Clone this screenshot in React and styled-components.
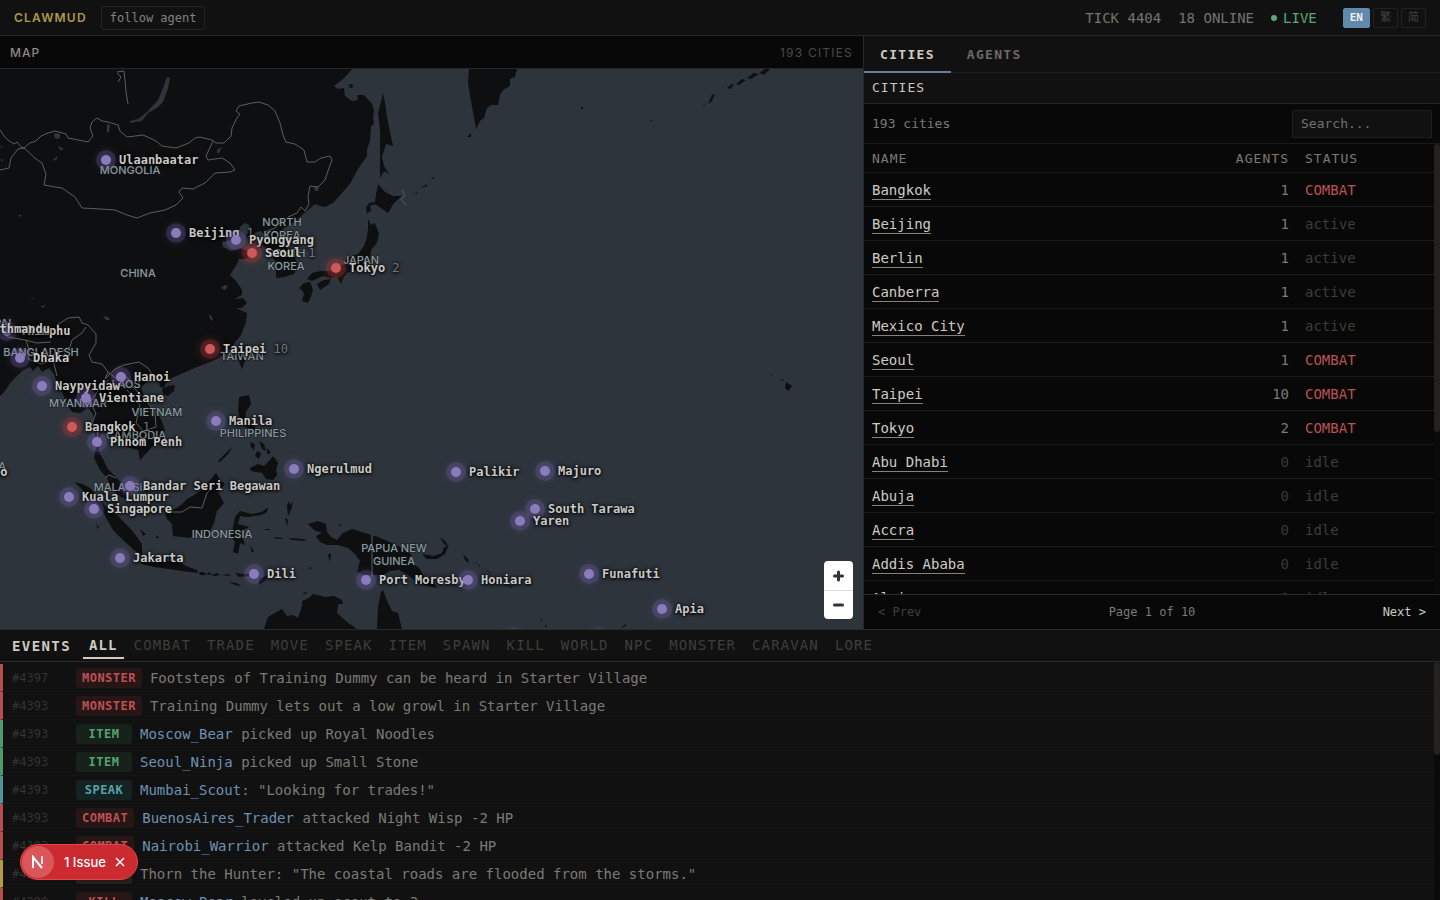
import React from 'react';
import styled, { createGlobalStyle, css } from 'styled-components';

const mono = "'DejaVu Sans Mono', 'Noto Sans CJK TC', monospace";
const sans = "Inter, sans-serif";

const GlobalStyle = createGlobalStyle`
  * {
    box-sizing: border-box;
  }

  body {
    margin: 0;
    background: #080808;
    color: #cac6be;
    font-family: ${mono};
    font-size: 14px;
  }

  button {
    margin: 0;
    padding: 0;
    border: 0;
    background: none;
    color: inherit;
    font-family: inherit;
    cursor: pointer;
  }
`;

const Page = styled.div`
  display: flex;
  flex-direction: column;
  height: 100vh;
  overflow: hidden;
`;

const TopBar = styled.header`
  display: flex;
  align-items: center;
  flex: 0 0 36px;
  padding: 0 14px;
  background: #111111;
  border-bottom: 1px solid #272727;
`;

const Logo = styled.h1`
  margin: 0 14px 0 0;
  font-family: ${sans};
  font-size: 12px;
  font-weight: 600;
  letter-spacing: 0.1em;
  color: #ab9a4e;
`;

const FollowButton = styled.button`
  height: 24px;
  padding: 0 8px;
  border: 1px solid #242424;
  border-radius: 2px;
  font-size: 12px;
  color: #85827d;
`;

const Stats = styled.div`
  display: flex;
  align-items: center;
  gap: 17px;
  margin-left: auto;
  color: #75736f;
`;

const Live = styled.span`
  display: flex;
  align-items: center;
  gap: 6px;
  color: #5aa877;

  &::before {
    content: '';
    width: 6px;
    height: 6px;
    border-radius: 50%;
    background: #5aa877;
  }
`;

const Langs = styled.div`
  display: flex;
  gap: 3px;
  margin-left: 26px;
`;

const LangButton = styled.button`
  height: 20px;
  padding: 0 6px;
  border: 1px solid ${(p) => (p.$active ? '#6189ac' : '#222222')};
  border-radius: 2px;
  background: ${(p) => (p.$active ? '#6189ac' : 'transparent')};
  color: ${(p) => (p.$active ? '#f0f0f0' : '#41403e')};
  font-size: 11px;
  font-weight: ${(p) => (p.$active ? 700 : 400)};
  line-height: 16px;
`;

const Main = styled.main`
  display: grid;
  grid-template-columns: 3fr 2fr;
  flex: 1;
  min-height: 0;
  border-bottom: 1px solid #2a2a2a;
`;

const MapPanel = styled.section`
  display: flex;
  flex-direction: column;
  min-width: 0;
  min-height: 0;
  border-right: 1px solid #272727;
`;

const MapHeader = styled.div`
  display: flex;
  align-items: center;
  justify-content: space-between;
  flex: 0 0 33px;
  padding: 0 10px;
  border-bottom: 1px solid #272727;
  font-family: ${sans};
  font-size: 12px;
  letter-spacing: 0.1em;
  color: #4b4a47;

  h2 {
    margin: 0;
    font-size: 12px;
    font-weight: 500;
    letter-spacing: 0.08em;
    color: #8c8983;
  }
`;

const MapArea = styled.div`
  position: relative;
  flex: 1;
  min-height: 0;
  overflow: hidden;
  background: #2d343c;

  > svg {
    position: absolute;
    top: 0;
    left: 0;
  }
`;

const Pin = styled.div`
  position: absolute;
  width: 10px;
  height: 10px;
  margin: -5px 0 0 -5px;
  border-radius: 50%;
  background: ${(p) => (p.$combat ? '#cc5a5c' : '#8a7cba')};
  box-shadow: 0 0 0 5px ${(p) => (p.$combat ? 'rgba(190, 60, 60, 0.24)' : 'rgba(125, 105, 185, 0.24)')},
    0 0 10px 5px ${(p) => (p.$combat ? 'rgba(190, 60, 60, 0.3)' : 'rgba(125, 105, 185, 0.2)')};

  span {
    position: absolute;
    top: -3px;
    left: 18px;
    font-size: 12px;
    font-weight: 700;
    line-height: 16px;
    white-space: pre;
    color: #c9c8c4;
    text-shadow: 0 0 4px #000000, 0 1px 3px #000000;
  }

  em {
    font-style: normal;
    font-weight: 400;
    color: #73777a;
  }
`;

const ZoomControl = styled.div`
  position: absolute;
  right: 10px;
  bottom: 10px;
  display: flex;
  flex-direction: column;
  width: 29px;
  border-radius: 4px;
  background: #ffffff;

  button {
    display: flex;
    align-items: center;
    justify-content: center;
    height: 29px;
  }

  button + button {
    border-top: 1px solid #dddddd;
  }
`;

const SidePanel = styled.aside`
  display: flex;
  flex-direction: column;
  min-width: 0;
  min-height: 0;
`;

const Tabs = styled.div`
  display: flex;
  flex: 0 0 37px;
  min-height: 0;
  background: #111111;
  border-bottom: 1px solid #1c1c1c;
`;

const Tab = styled.button`
  height: 37px;
  padding: 2px 16px 0;
  border-bottom: 2px solid ${(p) => (p.$active ? '#64819c' : 'transparent')};
  font-size: 13px;
  font-weight: 700;
  letter-spacing: 0.1em;
  color: ${(p) => (p.$active ? '#cfcbc3' : '#6b6965')};
`;

const PanelTitle = styled.h2`
  flex: 0 0 31px;
  margin: 0;
  padding: 0 8px;
  background: #111111;
  border-bottom: 1px solid #252525;
  font-size: 13px;
  font-weight: 400;
  line-height: 30px;
  letter-spacing: 0.08em;
`;

const SearchRow = styled.div`
  display: flex;
  align-items: center;
  justify-content: space-between;
  flex: 0 0 40px;
  padding: 0 8px;
  border-bottom: 1px solid #1a1a1a;
  font-size: 13px;
  color: #7d7a75;
`;

const SearchInput = styled.input`
  width: 140px;
  height: 28px;
  padding: 0 8px;
  border: 1px solid #1e1e1e;
  border-radius: 0;
  background: #111111;
  color: #cac6be;
  font-family: inherit;
  font-size: 13px;

  &::placeholder {
    color: #73716d;
    opacity: 1;
  }
`;

const ScrollArea = styled.div`
  display: flex;
  flex: 1;
  min-height: 0;
  overflow: hidden;
`;

const Rail = styled.div`
  flex: 0 0 6px;
  background: #0a0a0a;

  &::before {
    content: '';
    display: block;
    height: ${(p) => p.$thumb};
    border-radius: 3px;
    background: #24221f;
  }
`;

const CityTable = styled.table`
  flex: 1;
  height: max-content;
  border-spacing: 0;
  table-layout: fixed;

  th,
  td {
    padding: 0 8px;
    border-bottom: 1px solid #1b1b1b;
    text-align: left;
  }

  th {
    height: 29px;
    font-size: 13px;
    font-weight: 400;
    letter-spacing: 0.08em;
    color: #7d7a75;
  }

  td {
    height: 34px;
  }

  td:first-child {
    padding-top: 2px;
  }

  th:nth-child(2),
  td:nth-child(2) {
    width: 120px;
    text-align: right;
  }

  th:nth-child(3) {
    width: 137px;
  }
`;

const CityLink = styled.a`
  display: inline-block;
  border-bottom: 1px solid #85827c;
  color: #cfcbc3;
  line-height: 17px;
  text-decoration: none;
`;

const Count = styled.td`
  color: ${(p) => (p.$empty ? '#393836' : '#7d7a75')};
`;

const Status = styled.td`
  color: ${(p) => (p.$combat ? '#bd5154' : '#3e3d3b')};
`;

const Pager = styled.nav`
  display: flex;
  align-items: center;
  justify-content: space-between;
  flex: 0 0 35px;
  padding: 0 14px;
  border-top: 1px solid #2a2a2a;
  font-size: 12px;
  color: #7d7a75;
`;

const PageButton = styled.button`
  font-size: 12px;
  color: #cfcbc3;

  &:disabled {
    color: #41403e;
  }
`;

const Events = styled.section`
  display: flex;
  flex-direction: column;
  flex: 0 0 30vh;
  min-height: 0;
  background: #111111;
`;

const EventsHeader = styled.div`
  display: flex;
  align-items: center;
  flex: 0 0 32px;
  padding: 0 12px;
  border-bottom: 1px solid #2a2a2a;

  h2 {
    margin: 0 12px 0 0;
    font-size: 14px;
    letter-spacing: 0.1em;
    color: #cfcbc3;
  }
`;

const Filter = styled.button`
  height: 26px;
  margin-right: 4px;
  padding: 0 6px;
  border-bottom: 2px solid ${(p) => (p.$active ? '#cfcbc3' : 'transparent')};
  font-size: 14px;
  font-weight: ${(p) => (p.$active ? 700 : 400)};
  letter-spacing: 0.08em;
  color: ${(p) => (p.$active ? '#cfcbc3' : '#3f3e3b')};
`;

const EventList = styled.ul`
  flex: 1;
  min-width: 0;
  height: max-content;
  margin: 0;
  padding: 2px 0 0;
  list-style: none;
`;

const tones = {
  red: css`
    border-left-color: #b84e50;
    --tone: #bd5154;
    --tint: #271616;
  `,
  green: css`
    border-left-color: #4f9a6c;
    --tone: #56a173;
    --tint: #16211a;
  `,
  teal: css`
    border-left-color: #4f939d;
    --tone: #55a2a8;
    --tint: #152224;
  `,
  yellow: css`
    border-left-color: #b69b45;
    --tone: #b69b45;
    --tint: #23211a;
  `,
};

const EventRow = styled.li`
  display: flex;
  align-items: center;
  height: 28px;
  padding: 0 9px;
  border-left: 3px solid;
  border-bottom: 1px solid #151515;
  color: #7d7a75;
  white-space: nowrap;
  ${(p) => tones[p.$tone]}

  time {
    flex: 0 0 64px;
    font-size: 12px;
    color: #343331;
  }

  a {
    color: #6d92b4;
    text-decoration: none;
  }
`;

const Badge = styled.span`
  min-width: 56px;
  margin-right: 8px;
  padding: 1px 6px 0;
  border-radius: 2px;
  background: var(--tint);
  color: var(--tone);
  font-size: 12px;
  font-weight: 700;
  line-height: 19px;
  letter-spacing: 0.04em;
  text-align: center;
`;

const IssuePill = styled.div`
  position: fixed;
  left: 20px;
  bottom: 20px;
  display: flex;
  align-items: center;
  height: 36px;
  padding: 0 11px 0 1px;
  border: 1px solid #e0474d;
  border-radius: 18px;
  background: #ca2a30;
  color: #ffffff;
  font-family: ${sans};
  font-size: 13px;
  font-weight: 500;

  button {
    display: flex;
  }
`;

const NextMark = styled.span`
  display: flex;
  align-items: center;
  justify-content: center;
  width: 32px;
  height: 32px;
  margin-right: 10px;
  border-radius: 50%;
  background: #d9565b;
`;

const IssueText = styled.button`
  margin-right: 8px;
  font-size: 13px;
  font-weight: 500;
`;

// x, y are in map space; the view starts 69 units down
const pins = [
  [106, 160, 'Ulaanbaatar'],
  [176, 233, 'Beijing', 1],
  [236, 240, 'Pyongyang'],
  [252, 253, 'Seoul', 1, true],
  [336, 268, 'Tokyo', 2, true],
  [7, 331, 'Thimphu'],
  [-28, 329, 'Kathmandu'],
  [20, 358, 'Dhaka'],
  [210, 349, 'Taipei', 10, true],
  [121, 377, 'Hanoi'],
  [42, 386, 'Naypyidaw'],
  [86, 398, 'Vientiane'],
  [72, 427, 'Bangkok', 1, true],
  [97, 442, 'Phnom Penh'],
  [216, 421, 'Manila'],
  [-56, 472, 'Colombo'],
  [294, 469, 'Ngerulmud'],
  [456, 472, 'Palikir'],
  [545, 471, 'Majuro'],
  [130, 486, 'Bandar Seri Begawan'],
  [69, 497, 'Kuala Lumpur'],
  [94, 509, 'Singapore'],
  [535, 509, 'South Tarawa'],
  [520, 521, 'Yaren'],
  [120, 558, 'Jakarta'],
  [254, 574, 'Dili'],
  [366, 580, 'Port Moresby'],
  [468, 580, 'Honiara'],
  [589, 574, 'Funafuti'],
  [662, 609, 'Apia'],
  [514, 638],
  [599, 638],
];

const countries = [
  [130, 174, 'MONGOLIA'],
  [282, 226, 'NORTH'],
  [282, 239, 'KOREA'],
  [286, 257, 'SOUTH'],
  [286, 270, 'KOREA'],
  [361, 264, 'JAPAN'],
  [138, 277, 'CHINA'],
  [-3, 327, 'NEPAL'],
  [41, 356, 'BANGLADESH'],
  [242, 360, 'TAIWAN'],
  [126, 388, 'LAOS'],
  [78, 407, 'MYANMAR'],
  [157, 416, 'VIETNAM'],
  [136, 439, 'CAMBODIA'],
  [253, 437, 'PHILIPPINES'],
  [-23, 470, 'SRI LANKA'],
  [122, 491, 'MALAYSIA'],
  [222, 538, 'INDONESIA'],
  [394, 552, 'PAPUA NEW'],
  [394, 565, 'GUINEA'],
];

const land = [
  // Asia
  'M0 69H352L348 74L343 79L334 86L338 89L344 88L345 96L352 101L358 100L357 95L364 95L372 104L374 110L373 118L374 123L371 127L370 140L367 150L367 156L358 169L350 184L341 194L333 203L325 207L320 206L315 204L308 210L303 214L296 221L284 228L277 237L284 246L294 254L298 266L294 274L284 277L276 278L276 262L268 250L262 244L267 237L261 231L254 233L249 238L246 236L251 229L249 225L245 223L240 227L239 235L232 240L222 242L223 247L232 251L240 248L248 251L252 255L246 259L239 259L236 266L230 275L236 281L242 290L242 295L234 299L243 298L247 303L242 308L236 308L247 313L246 322L241 335L233 345L224 355L213 361L197 367L181 374L167 380L164 388L160 387L158 380L148 380L141 388L146 402L160 417L165 430L163 440L153 446L140 460L138 450L127 447L118 437L111 434L102 432L99 438L99 452L103 459L107 468L116 477L125 487L128 500L121 497L112 490L107 478L100 470L94 458L97 443L94 432L93 414L88 408L80 413L72 412L66 402L62 392L57 383L54 374L49 368L42 372L38 366L33 371L30 367L22 371L17 376L10 383L5 391L0 396Z',
  // Sakhalin, Hokkaido, Honshu, Shikoku, Kyushu
  'M383 93L385 103L387 117L390 132L393 146L386 144L382 157L384 166L389 174L384 171L380 178L380 157L380 130L378 113L381 102Z',
  'M378 184L385 192L393 196L402 196L394 203L388 213L381 208L375 204L370 206L371 210L367 214L366 208L369 203L375 202L376 195Z',
  'M368 219L371 225L375 223L379 234L377 243L371 250L370 261L361 268L347 273L343 279L341 284L337 277L330 278L323 276L312 281L307 279L312 273L321 271L333 271L337 266L343 265L347 258L358 254L364 246L367 237L368 229Z',
  'M317 284L324 280L331 279L329 284L320 290Z',
  'M299 288L304 283L310 282L313 290L311 297L308 303L302 301L304 294L302 290Z',
  // Kamchatka and the north Pacific islands
  'M469 69H517L515 77L510 79L510 86L503 90L500 95L498 105L491 105L487 108L484 118L480 121L476 129L473 112L470 96L468 83Z',
  'M467 137L471 133L471 137ZM413 195l5 -3v1zM421 188l6 -4v2zM431 179l3 -2v2zM727 88l5 -4l2 1l-4 4zM736 84l6 -5l4 1l-7 5zM747 78l7 -5l5 1l-8 5zM759 73l6 -4h5l-6 6zM701 107l4 -3v1zM708 104l4 -9l3 -1l-3 7zM537 82l3 5zM581 107h2v2h-2zM649 121l3 -1v1z',
  // Taiwan, Hainan
  'M247 344L248 353L242 369L237 357L239 350Z',
  'M162 389L168 386L175 385L174 391L168 396L163 394Z',
  // Philippines
  'M239 397L249 395L251 404L246 412L245 418L252 424L258 431L257 435L250 429L243 426L240 419L238 411Z',
  'M218 461L232 447L229 453L220 462ZM250 442l5 2l-1 6l-3 -3zM259 441l5 3l2 7l-4 -2zM257 451l4 2l-2 6l-4 -3zM267 448l4 5l-4 1z',
  'M250 468L258 464L264 466L269 461L273 456L278 463L276 470L277 475L273 480L266 479L262 473L256 472L251 471Z',
  // Sumatra, Java and the islands east of it
  'M74 482L82 484L90 488L98 498L110 510L119 517L126 524L134 533L142 544L142 555L134 550L124 541L113 530L105 516L98 504L86 493Z',
  'M140 561L150 559L160 562L168 561L178 562L186 566L197 570L198 573L182 571L168 569L154 567L142 564Z',
  'M199 572h5l2 3h-6zM206 574l4 -2l1 3zM211 575l6 -2l3 2l-6 1zM222 575l6 -1l3 2zM235 573l10 1l8 -1l-1 3l-13 1zM229 582l8 1l4 3l-6 -1zM259 579l10 -5l-3 6l-7 5zM96 524l3 3l-1 2zM140 529l6 5l-3 2zM156 535l3 2l-2 2z',
  'M165 513L173 510L181 505L187 499L196 494L204 489L210 480L216 473L220 480L225 484L218 492L224 503L217 511L214 523L207 537L195 534L190 538L173 536L172 524L167 519Z',
  'M235 517L240 511L252 514L262 512L268 507L267 512L261 515L248 517L240 516L238 524L249 527L244 530L241 532L245 545L240 543L238 554L233 552L235 542L231 537ZM250 545l4 6l-2 2zM287 506l2 -5l1 4l3 -3l-2 8l-3 6zM285 518l3 2l-1 6zM265 529h5v1h-5zM274 537l8 1l1 1h-7zM288 538l16 1l2 2l-14 -1zM328 555l3 -2l-1 9zM309 569l2 -3v3zM302 593l5 -1l-1 2z',
  // New Guinea and Melanesia
  'M308 524L318 521L326 524L327 532L331 537L337 540L343 533L352 529L365 533L378 537L392 543L402 548L411 554L412 563L419 568L425 578L434 583L437 588L428 586L418 583L408 575L399 570L390 571L383 575L374 575L365 575L357 572L360 561L355 554L348 548L338 545L327 545L320 542L316 536L322 533L314 530Z',
  'M422 554L434 556L442 553L444 547L448 547L445 554L437 559L427 559ZM440 537l6 5l3 6l-2 -1l-5 -6zM463 554l5 5l1 4l-4 -3zM474 561l6 5v1zM483 568l8 5v1zM502 583l10 4v1zM540 617l2 5v-2zM545 624l2 3h-2zM620 628l6 -4v2zM338 524l3 1v2z',
  // Australia
  'M264 629L268 617L275 613L282 609L287 616L293 615L298 618L302 606L302 601L309 598L313 594L325 597L334 596L342 600L343 604L338 604L337 613L347 622L357 629Z',
  'M377 629L378 607L381 592L383 590L388 603L392 611L398 613L402 629Z',
  // Hawaii
  'M786 382L792 386L788 391L785 388ZM770 374h2v1zM778 378l6 2v1z',
];

const borders = [
  'M0 130L4 136L8 140L14 144L17 142L21 147L24 148L30 143L36 141L41 136L48 133L55 131L66 134L68 138L78 140L88 142L93 136L90 128L92 122L97 118L102 121L108 122L118 125L120 131L127 137L143 135L152 139L156 141L162 146L176 148L189 143L195 138L200 137L212 140L216 143L224 143L231 136L232 128L237 118L240 114L236 111L239 106L252 103L259 102L268 105L275 111L280 123L283 135L286 142L295 144L304 150L307 162L315 162L321 158L330 156L332 160L328 171L325 180L318 187L310 186L308 197L309 204L305 211L301 207L297 213L288 217',
  'M24 148L36 159L42 163L46 174L44 185L55 187L62 188L75 197L82 208L100 209L115 210L127 215L137 218L150 213L165 210L176 205L183 198L179 192L182 188L193 189L205 183L215 173L230 172L235 170L230 163L222 158L208 160L206 156L213 141',
  'M24 148L18 149L11 158L9 168L0 170',
  'M117 73L121 77L118 82M117 72L124 71L125 80L126 92L128 104',
  'M0 330L8 337L25 340L37 343L51 342M57 325L68 318L79 317L82 323L88 325L96 334L96 343L89 355L92 362L102 364L108 372L105 379L115 369L124 365L139 362L148 368L153 376L163 377',
  'M26 340L29 350L28 359L41 364L53 360L57 376M86 327L82 333L72 340L70 347L59 353L55 363',
  'M108 380L97 392L90 403L96 413L92 423L98 430L97 440M108 372L118 380L127 377L133 387L146 400L155 413L156 427L143 431L136 423L140 405L127 390',
  'M171 512L182 512L190 507L202 508L207 493L213 487M105 478L109 475L116 478',
  'M372 535V577M265 232L275 228L283 220M402 190L405 196L401 199L406 205',
];

const cities = [
  ['Bangkok', 1, 'COMBAT'],
  ['Beijing', 1, 'active'],
  ['Berlin', 1, 'active'],
  ['Canberra', 1, 'active'],
  ['Mexico City', 1, 'active'],
  ['Seoul', 1, 'COMBAT'],
  ['Taipei', 10, 'COMBAT'],
  ['Tokyo', 2, 'COMBAT'],
  ['Abu Dhabi', 0, 'idle'],
  ['Abuja', 0, 'idle'],
  ['Accra', 0, 'idle'],
  ['Addis Ababa', 0, 'idle'],
  ['Algiers', 0, 'idle'],
];

const filters = [
  'ALL', 'COMBAT', 'TRADE', 'MOVE', 'SPEAK', 'ITEM', 'SPAWN',
  'KILL', 'WORLD', 'NPC', 'MONSTER', 'CARAVAN', 'LORE',
];

const events = [
  { tick: '#4397', type: 'MONSTER', tone: 'red', text: 'Footsteps of Training Dummy can be heard in Starter Village' },
  { tick: '#4393', type: 'MONSTER', tone: 'red', text: 'Training Dummy lets out a low growl in Starter Village' },
  { tick: '#4393', type: 'ITEM', tone: 'green', who: 'Moscow_Bear', text: ' picked up Royal Noodles' },
  { tick: '#4393', type: 'ITEM', tone: 'green', who: 'Seoul_Ninja', text: ' picked up Small Stone' },
  { tick: '#4393', type: 'SPEAK', tone: 'teal', who: 'Mumbai_Scout', text: ': "Looking for trades!"' },
  { tick: '#4393', type: 'COMBAT', tone: 'red', who: 'BuenosAires_Trader', text: ' attacked Night Wisp -2 HP' },
  { tick: '#4393', type: 'COMBAT', tone: 'red', who: 'Nairobi_Warrior', text: ' attacked Kelp Bandit -2 HP' },
  { tick: '#4392', type: 'NPC', tone: 'yellow', text: 'Thorn the Hunter: "The coastal roads are flooded from the storms."' },
  { tick: '#4390', type: 'KILL', tone: 'red', who: 'Moscow_Bear', text: ' leveled up scout to 3' },
];

const WorldMap = () => (
  <MapArea>
    <svg width="1440" height="560" viewBox="0 69 1440 560" aria-hidden="true">
      <g fill="#0e0f10">
        {land.map((d, i) => (
          <path key={i} d={d} />
        ))}
      </g>
      <g fill="#2d343c">
        <path d="M167 77L170 78L168 88L163 102L157 108L148 113L142 121L130 123L130 121L138 119L147 112L158 100L163 88Z" />
        <g fill="#333739">
          <path d="M55 133l5 1v4l-4 1l-2 -3zM107 124l3 1l-1 7l-2 1zM58 146l6 3l-4 1zM53 160l4 -4v3l-4 2zM217 150l5 -3l-3 6h-2zM314 187l5 0l-1 4l-3 0z" />
          <path d="M0 147l2 -1v2zM0 160l3 -1v2zM18 215h4l-2 2zM103 316l5 1l2 3l-4 0zM30 298h4l1 1zM41 306l5 -1l-3 3zM221 288l4 -3l3 1l-3 4zM209 314l3 3l1 4l-3 -2z" />
        </g>
        <circle cx="351" cy="86" r="2" fill="#0e0f10" />
      </g>
      <g fill="none" stroke="#5b5d5e" strokeWidth="1" strokeLinejoin="round">
        {borders.map((d, i) => (
          <path key={i} d={d} />
        ))}
      </g>
      <g fill="#8a9a9e" stroke="#14181b" strokeWidth="1" paintOrder="stroke" fontFamily={sans} fontSize="11" fontWeight="500" textAnchor="middle">
        {countries.map(([x, y, name], i) => (
          <text key={i} x={x} y={y}>{name}</text>
        ))}
      </g>
    </svg>
    {pins.map(([x, y, name, agents, combat], i) => (
      <Pin key={i} $combat={combat} style={{ left: x, top: y - 69 }}>
        {name && (
          <span>
            {name}
            {agents && <em> {agents}</em>}
          </span>
        )}
      </Pin>
    ))}
    <ZoomControl>
      <button type="button" aria-label="Zoom in">
        <svg width="11" height="12" viewBox="0 0 11 12" stroke="#333333" strokeWidth="3" strokeLinecap="round">
          <path d="M1.5 6H9.5M5.5 2V10" />
        </svg>
      </button>
      <button type="button" aria-label="Zoom out">
        <svg width="11" height="12" viewBox="0 0 11 12" stroke="#333333" strokeWidth="3" strokeLinecap="round">
          <path d="M1.5 6H9.5" />
        </svg>
      </button>
    </ZoomControl>
  </MapArea>
);

const CityPanel = () => (
  <SidePanel>
    <Tabs>
      <Tab type="button" $active>CITIES</Tab>
      <Tab type="button">AGENTS</Tab>
    </Tabs>
    <PanelTitle>CITIES</PanelTitle>
    <SearchRow>
      <span>193 cities</span>
      <SearchInput type="text" placeholder="Search..." aria-label="Search cities" />
    </SearchRow>
    <ScrollArea>
      <CityTable>
        <thead>
          <tr>
            <th>NAME</th>
            <th>AGENTS</th>
            <th>STATUS</th>
          </tr>
        </thead>
        <tbody>
          {cities.map(([name, agents, status]) => (
            <tr key={name}>
              <td>
                <CityLink href="#city">{name}</CityLink>
              </td>
              <Count $empty={agents === 0}>{agents}</Count>
              <Status $combat={status === 'COMBAT'}>{status}</Status>
            </tr>
          ))}
        </tbody>
      </CityTable>
      <Rail $thumb="64%" />
    </ScrollArea>
    <Pager>
      <PageButton type="button" disabled>&lt; Prev</PageButton>
      <span>Page 1 of 10</span>
      <PageButton type="button">Next &gt;</PageButton>
    </Pager>
  </SidePanel>
);

const EventLog = () => (
  <Events>
    <EventsHeader>
      <h2>EVENTS</h2>
      {filters.map((name) => (
        <Filter key={name} type="button" $active={name === 'ALL'}>{name}</Filter>
      ))}
    </EventsHeader>
    <ScrollArea>
      <EventList>
        {events.map((event, index) => (
          <EventRow key={index} $tone={event.tone}>
            <time>{event.tick}</time>
            <Badge>{event.type}</Badge>
            <span>
              {event.who && <a href="#agent">{event.who}</a>}
              {event.text}
            </span>
          </EventRow>
        ))}
      </EventList>
      <Rail $thumb="39%" />
    </ScrollArea>
  </Events>
);

const App = () => {
  return (
    <Page>
      <GlobalStyle />
      <TopBar>
        <Logo>CLAWMUD</Logo>
        <FollowButton type="button">follow agent</FollowButton>
        <Stats>
          <span>TICK 4404</span>
          <span>18 ONLINE</span>
          <Live>LIVE</Live>
        </Stats>
        <Langs>
          <LangButton type="button" $active>EN</LangButton>
          <LangButton type="button">繁</LangButton>
          <LangButton type="button">简</LangButton>
        </Langs>
      </TopBar>
      <Main>
        <MapPanel>
          <MapHeader>
            <h2>MAP</h2>
            <span>193 CITIES</span>
          </MapHeader>
          <WorldMap />
        </MapPanel>
        <CityPanel />
      </Main>
      <EventLog />
      <IssuePill>
        <NextMark>
          <svg width="14" height="14" viewBox="0 0 14 14" fill="none" stroke="#ffffff" strokeWidth="2">
            <path d="M2 13V2L11 13" />
            <path d="M11 1V9" opacity="0.8" />
          </svg>
        </NextMark>
        <IssueText type="button">1 Issue</IssueText>
        <button type="button" aria-label="Dismiss">
          <svg width="12" height="12" viewBox="0 0 12 12" stroke="#ffffff" strokeWidth="1.5">
            <path d="M2 2L10 10M10 2L2 10" />
          </svg>
        </button>
      </IssuePill>
    </Page>
  );
};

export default App;
